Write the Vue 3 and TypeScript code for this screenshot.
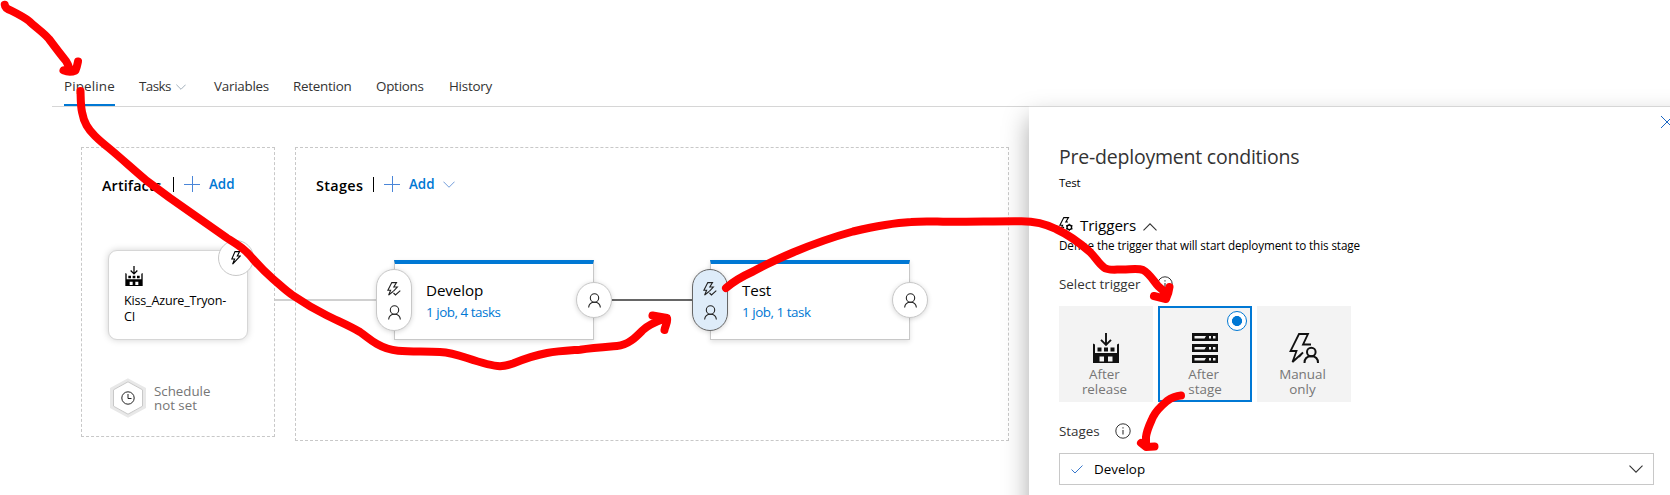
<script setup lang="ts">
interface Tab { label: string; active?: boolean; menu?: boolean }
interface Stage { name: string; summary: string; selected: boolean; x: number }
interface Trigger { lines: string[]; icon: string; width: number; selected?: boolean }

const tabs: Tab[] = [
  { label: 'Pipeline', active: true },
  { label: 'Tasks', menu: true },
  { label: 'Variables' },
  { label: 'Retention' },
  { label: 'Options' },
  { label: 'History' },
]

const stages: Stage[] = [
  { name: 'Develop', summary: '1 job, 4 tasks', selected: false, x: 394 },
  { name: 'Test', summary: '1 job, 1 task', selected: true, x: 710 },
]

const triggers: Trigger[] = [
  { lines: ['After', 'release'], icon: '#i-factory', width: 26 },
  { lines: ['After', 'stage'], icon: '#i-server', width: 26, selected: true },
  { lines: ['Manual', 'only'], icon: '#i-manual', width: 30 },
]

const strokes: string[] = [
  'M4.7 4.7C5 8 8 9.5 11 10.5C18 14 24 17 29 21C35 27 43 32 49 39C55 47 61 55 66 61C68 64 69 67 70 70M63.5 70.3C67 71.8 72 72 75.5 70.5C77 67 77.500 64 78 61.500',
  'M80.500 91C80.800 97 80.500 105 82 112C84 123 88 129 95 136C100 141 105 145 110 149C122 159 135 171 147 181C155 187 162 192 170 198C190 212 210 226 227 238C238 245 245 249 253 259C260 267 266 273 273 279C280 285 286 291 293 295.500C304 303 316 310 327 315.500C338 321 350 326 360 332C366 336 370 340 377 344C384 348 390 350 398 350.700C412 352 426 351 440 352C450 352.500 458 355 467 358C479 362 492 366 500 366.200C504 366 509 365 513 363.500C524 359 536 355 547 353C558 351 569 350.500 580 349.700C592 348 605 347 617 346C629 345 637 336 643 330C648 325 655 322 666 318M652.500 315.500L667 318C668 323 665 326 664.500 330',
  'M726 288C734 281 743 276 753 271.500C766 264 780 258 793 252.500C813 244 833 237 853 231.500C872 227 891 223 911 222C922 221 932 221.500 943 221.700C969 222 995 221 1020 221.200C1033 221 1046 224 1056 229C1069 235 1081 244 1090 252C1096 258 1099 264 1104 267.500C1108 271 1116 269.300 1123 269.500C1130 269.500 1138 268 1143 270C1149 273 1153 280 1158 286L1167 294M1154 296L1166 299C1168 295 1169 291 1169.500 287',
  'M1181 395.500C1175 396 1171 398 1167 401C1161 406 1156 411 1153 417C1150 424 1147 429 1146 437V446M1141 443L1146 447L1154.500 446.500',
]
</script>

<template>
  <div class="page">
    <svg class="defs" aria-hidden="true">
      <symbol id="i-factory" viewBox="0 0 26 30">
        <path d="M13 0V11M8 6.800L13 11.800L18 6.800" fill="none" stroke="currentColor" stroke-width="1.900" />
        <path fill-rule="evenodd" d="M0 10.500L2 11.500V20H24V11.500L26 10.500V30H0ZM6.500 23.500V28.500H11V23.500ZM15 23.500V28.500H19.500V23.500Z" fill="currentColor" />
        <path d="M4.500 14.500h4v4h-4zM11 14.500h4v4h-4zM17.500 14.500h4v4h-4z" fill="currentColor" />
      </symbol>
      <symbol id="i-server" viewBox="0 0 26 30">
        <g v-for="y in [0, 11, 22]" :key="y">
          <path fill-rule="evenodd" :d="`M0 ${y}h26v8h-26zM2.500 ${y + 3}v2.500h10l1.500-2.500zM17 ${y + 3}v2.500h2v-2.500zM21 ${y + 3}v2.500h2.500v-2.500z`" fill="currentColor" />
        </g>
      </symbol>
      <symbol id="i-manual" viewBox="0 0 30 30">
        <path d="M14 19.500L3.500 29L7.500 18H1.500L10 1H19L14 11.500H22M14 19.500L10 24" fill="none" stroke="currentColor" stroke-width="1.800" />
        <circle cx="22.300" cy="19" r="4.300" fill="none" stroke="currentColor" stroke-width="2" />
        <path d="M15.500 30C15.500 25.500 18 23.300 22.300 23.300S29 25.500 29 30" fill="none" stroke="currentColor" stroke-width="2" />
      </symbol>
      <symbol id="i-bolt" viewBox="0 0 10 14">
        <path d="M4 .6H8.600L6.300 5H9.300L1.600 13.200L3.600 8H.8Z" fill="none" stroke="currentColor" stroke-width="1.100" />
      </symbol>
      <symbol id="i-bolt-check" viewBox="0 0 14 14">
        <path d="M6 9.500L1.600 13.200L3.600 8.200H.9L4.800 .6H9.500L6.800 5H10.300L6.300 9.300M6.500 11L8.500 13L13.300 8.600" fill="none" stroke="currentColor" stroke-width="1.100" />
      </symbol>
      <symbol id="i-bolt-gear" viewBox="0 0 14 14">
        <path d="M5 10L1.600 13.200L3.600 8.200H.9L4.800 .6H9.500L6.800 5H9" fill="none" stroke="currentColor" stroke-width="1.100" />
        <circle cx="10.300" cy="10.300" r="2.300" fill="none" stroke="currentColor" stroke-width="1.300" />
        <path d="M10.300 6.800v1M10.300 12.800v1M7.200 8.500l1 .6M12.400 11.500l1 .6M7.200 12.100l1-.6M12.400 9.100l1-.6" stroke="currentColor" stroke-width="1.300" />
      </symbol>
      <symbol id="i-person" viewBox="0 0 13 15">
        <circle cx="6.500" cy="5" r="4.200" fill="none" stroke="currentColor" stroke-width="1.100" />
        <path d="M.6 14.500C.9 11.200 3 9.200 6.500 9.200S12.100 11.200 12.400 14.500" fill="none" stroke="currentColor" stroke-width="1.100" />
      </symbol>
      <symbol id="i-plus" viewBox="0 0 16 16">
        <path d="M8.500 0V16M0 8.500H16" stroke="currentColor" stroke-width="1" />
      </symbol>
      <symbol id="i-chevron" viewBox="0 0 14 8">
        <path d="M.5 .7L7 7.200L13.500 .7" fill="none" stroke="currentColor" stroke-width="1.100" />
      </symbol>
      <symbol id="i-info" viewBox="0 0 16 16">
        <circle cx="8" cy="8" r="7.200" fill="none" stroke="currentColor" stroke-width="1" />
        <path d="M8 7V11.500M8 4.300V5.500" stroke="currentColor" stroke-width="1.100" />
      </symbol>
    </svg>

    <nav class="tabs">
      <a v-for="tab in tabs" :key="tab.label" class="tab" :class="{ active: tab.active, menu: tab.menu }">
        <span>{{ tab.label }}</span>
        <svg v-if="tab.menu" class="tab-chevron"><use href="#i-chevron" /></svg>
      </a>
    </nav>

    <main class="canvas">
      <section class="group artifacts">
        <header class="group-head">
          <h2>Artifacts</h2>
          <button class="add"><svg class="plus"><use href="#i-plus" /></svg><span>Add</span></button>
        </header>
        <div class="artifact">
          <svg class="artifact-icon"><use href="#i-factory" /></svg>
          <div class="artifact-name">Kiss_Azure_Tryon-<br>CI</div>
          <span class="badge"><svg class="bolt"><use href="#i-bolt" /></svg></span>
        </div>
        <div class="schedule">
          <svg class="hexagon" viewBox="0 0 36 40">
            <path d="M18 2L34.500 11V29L18 38L1.500 29V11Z" fill="#fff" stroke="#e8e8e8" stroke-width="3" />
            <path d="M18 3.800L32.500 11.800V28.200L18 36.200L3.500 28.200V11.800Z" fill="#fff" stroke="#c8c8c8" />
            <circle cx="18" cy="20" r="6.200" fill="none" stroke="#222" />
            <path d="M18 16V20.500H21.500" fill="none" stroke="#222" />
          </svg>
          <p><span>Schedule</span><span>not set</span></p>
        </div>
      </section>

      <section class="group stages">
        <header class="group-head">
          <h2>Stages</h2>
          <button class="add"><svg class="plus"><use href="#i-plus" /></svg><span>Add</span><svg class="add-chevron"><use href="#i-chevron" /></svg></button>
        </header>
      </section>
    </main>

    <div class="connector from-artifact"></div>
    <div class="connector between"></div>
    <article v-for="stage in stages" :key="stage.name" class="stage" :style="{ left: stage.x + 'px' }">
      <h3>{{ stage.name }}</h3>
      <a>{{ stage.summary }}</a>
      <span class="pre" :class="{ selected: stage.selected }">
        <svg class="bolt-check"><use href="#i-bolt-check" /></svg>
        <svg class="person"><use href="#i-person" /></svg>
      </span>
      <span class="post"><svg class="person"><use href="#i-person" /></svg></span>
    </article>

    <div class="panel-clip">
      <aside class="panel">
        <svg class="close" viewBox="0 0 12 12"><path d="M0 0L12 12M12 0L0 12" stroke="currentColor" /></svg>
        <h1>Pre-deployment conditions</h1>
        <div class="subtitle">Test</div>
        <div class="section-title">
          <svg class="bolt-gear"><use href="#i-bolt-gear" /></svg>
          <span>Triggers</span>
          <svg class="chevron up"><use href="#i-chevron" /></svg>
        </div>
        <div class="hint">Define the trigger that will start deployment to this stage</div>
        <div class="label select-trigger"><span>Select trigger</span><svg class="info"><use href="#i-info" /></svg></div>
        <div class="choices">
          <div v-for="t in triggers" :key="t.icon" class="choice" :class="{ selected: t.selected }">
            <svg class="choice-icon" :style="{ width: t.width + 'px' }"><use :href="t.icon" /></svg>
            <div class="choice-text"><span v-for="line in t.lines" :key="line">{{ line }}</span></div>
            <i v-if="t.selected" class="radio"></i>
          </div>
        </div>
        <div class="label stage-label"><span>Stages</span><svg class="info"><use href="#i-info" /></svg></div>
        <div class="select">
          <svg class="check" viewBox="0 0 12 9"><path d="M.5 4.500L4 8L11.500 .5" fill="none" stroke="currentColor" /></svg>
          <span>Develop</span>
          <svg class="chevron"><use href="#i-chevron" /></svg>
        </div>
      </aside>
    </div>

    <svg class="markup" viewBox="0 0 1670 495">
      <path v-for="(d, i) in strokes" :key="i" :d="d" />
    </svg>
  </div>
</template>

<style>
body { margin: 0; background: #fff; overflow: hidden; }
</style>

<style scoped>
.page {
  position: relative;
  width: 1670px;
  height: 495px;
  overflow: hidden;
  background: #fff;
  font-family: "Open Sans", "Noto Sans", sans-serif;
  font-size: 13.4px;
  letter-spacing: -0.25px;
  color: #000;
}
svg { display: block; flex: none; }
.defs { position: absolute; width: 0; height: 0; }
h1, h2, h3, p { margin: 0; font-weight: 400; }

.tabs {
  display: grid;
  grid-template-columns: 75px 75px 79px 83px 73px 80px;
  margin-left: 52px;
  padding: 76px 0 0 12px;
  height: 30px;
  border-bottom: 1px solid #d6d6d6;
  color: #333;
}
.tab {
  display: flex;
  justify-self: start;
  box-sizing: border-box;
  height: 30px;
  line-height: 20px;
}
.tab.active { width: 51px; font-weight: 500; letter-spacing: 0.15px; border-bottom: 2px solid #0078d4; }
.tab.menu { letter-spacing: -0.55px; }
.tab-chevron { width: 10px; height: 6px; margin: 8px 0 0 5px; color: #8a9aa8; }

.canvas { display: flex; align-items: flex-start; gap: 20px; padding: 40px 0 0 81px; }
.group { box-sizing: border-box; border: 1px dashed #c8c8c8; padding: 24px 0 0 20px; }
.artifacts { width: 194px; height: 290px; }
.stages { width: 714px; height: 294px; }
.group-head { display: flex; height: 26px; }
h2 { font-size: 14.4px; font-weight: 600; line-height: 28px; letter-spacing: 0.35px; white-space: nowrap; }
.artifacts h2 { width: 61px; letter-spacing: 0.1px; }
.stages h2 { width: 47px; }
.add {
  position: relative;
  display: flex;
  margin: 5px 0 0 10px;
  padding: 0 0 0 10px;
  height: 15px;
  border: 0;
  border-left: 1px solid #000;
  background: none;
  font: 600 13.4px/14px "Open Sans", "Noto Sans", sans-serif;
  color: #0078d4;
}
.plus { width: 16px; height: 16px; margin: -1px 9px 0 0; color: #4a86d8; }
.add-chevron { width: 12px; height: 7px; margin: 4px 0 0 8px; color: #6a97d8; }

.artifact {
  position: relative;
  box-sizing: border-box;
  width: 140px;
  height: 90px;
  margin: 52px 0 0 6px;
  padding: 15px 0 0 16px;
  border: 1px solid #d6d6d6;
  border-radius: 9px;
  background: #fff;
  box-shadow: 0 0 7px rgba(0, 0, 0, 0.18);
}
.artifact-icon { width: 18px; height: 20px; }
.artifact-name { margin: 7px 0 0 -1px; font-size: 12.6px; line-height: 16px; letter-spacing: -0.2px; }
.badge {
  position: absolute;
  left: 109px;
  top: -11px;
  display: grid;
  place-items: center;
  box-sizing: border-box;
  width: 36px;
  height: 36px;
  border: 1px solid #c8c8c8;
  border-radius: 50%;
  background: #fff;
}
.bolt { width: 10px; height: 14px; }
.schedule { display: flex; align-items: center; gap: 8px; margin: 38px 0 0 8px; color: #767676; }
.hexagon { width: 36px; height: 40px; }
.schedule p { display: flex; flex-direction: column; font-size: 13.300px; line-height: 14.500px; letter-spacing: 0; }

.connector { position: absolute; top: 299px; height: 2px; }
.from-artifact { left: 275px; width: 101px; background: #d0d0d0; }
.between { left: 612px; width: 80px; background: #666; }

.stage {
  position: absolute;
  top: 260px;
  box-sizing: border-box;
  width: 200px;
  height: 80px;
  padding: 17px 0 0 31px;
  border: 1px solid #c8c8c8;
  border-top: 4px solid #0078d4;
  background: #fff;
  box-shadow: 0 2px 5px rgba(0, 0, 0, 0.12);
}
h3 { font-size: 15.2px; line-height: 19px; letter-spacing: -0.1px; }
.stage a { display: block; margin-top: 3px; line-height: 18px; letter-spacing: -0.45px; color: #0078d4; }
.pre, .post {
  position: absolute;
  display: flex;
  flex-direction: column;
  align-items: center;
  box-sizing: border-box;
  width: 36px;
  border: 1px solid #c8c8c8;
  border-radius: 18px;
  background: #fff;
  box-shadow: 0 1px 5px rgba(0, 0, 0, 0.16);
  color: #222;
}
.pre { left: -19px; top: 5px; height: 62px; padding-top: 12px; gap: 9px; }
.pre.selected { background: #deecf9; border-color: #666; }
.post { left: 181px; top: 18px; height: 36px; justify-content: center; }
.bolt-check { width: 14px; height: 14px; }
.person { width: 13px; height: 15px; }

.panel-clip { position: absolute; left: 980px; top: 82px; width: 690px; height: 413px; overflow: hidden; }
.panel {
  position: relative;
  box-sizing: border-box;
  width: 680px;
  height: 500px;
  margin: 25px 0 0 49px;
  padding: 36px 0 0 30px;
  background: #fff;
  box-shadow: 0 -1px 0 #d6d6d6, 0 11px 24px rgba(0, 0, 0, 0.34);
}
.close { position: absolute; left: 632px; top: 9px; width: 12px; height: 12px; overflow: visible; color: #1a66c4; }
h1 { font-size: 19.5px; line-height: 28px; letter-spacing: -0.22px; color: #333; }
.subtitle { margin: 3px 0 0; font-size: 11.5px; line-height: 18px; }
.section-title { display: flex; margin-top: 22px; height: 22px; }
.section-title span { width: 57px; margin-left: 7px; font-size: 15.2px; line-height: 23px; letter-spacing: -0.1px; }
.bolt-gear { width: 14px; height: 14px; margin-top: 3px; }
.chevron { width: 14px; height: 8px; color: #333; }
.up { transform: rotate(180deg); margin: 9px 0 0 6px; }
.hint { margin: 0; font-size: 11.700px; line-height: 18px; white-space: nowrap; letter-spacing: -0.11px; }
.label { display: flex; align-items: center; height: 20px; letter-spacing: 0; color: #333; }
.info { width: 16px; height: 16px; }
.select-trigger { margin-top: 20px; }
.select-trigger span { width: 98px; }
.choices { display: flex; gap: 5px; margin-top: 12px; }
.choice {
  position: relative;
  display: flex;
  flex-direction: column;
  align-items: center;
  box-sizing: border-box;
  width: 94px;
  height: 96px;
  padding-top: 27px;
  background: #f3f3f3;
  color: #111;
}
.choice.selected { padding-top: 25px; border: 2px solid #0078d4; }
.choice-icon { height: 30px; }
.choice-text { display: flex; flex-direction: column; align-items: center; margin: 4px 3px 0 0; line-height: 15px; font-size: 13.400px; letter-spacing: 0; color: #767676; }
.choice.selected .choice-text { align-items: flex-start; margin-right: 0; }
.radio {
  position: absolute;
  right: 3px;
  top: 3px;
  box-sizing: border-box;
  width: 20px;
  height: 20px;
  border: 1px solid #0078d4;
  border-radius: 50%;
  background: radial-gradient(circle, #0078d4 4.700px, #fff 5.300px);
}
.stage-label { margin-top: 19px; }
.stage-label span { width: 56px; }
.select {
  display: flex;
  align-items: center;
  box-sizing: border-box;
  width: 595px;
  height: 32px;
  margin-top: 12px;
  padding: 0 10px 0 11px;
  border: 1px solid #c8c8c8;
}
.check { width: 12px; height: 9px; color: #3878cc; }
.select span { flex: 1; margin-left: 11px; letter-spacing: 0; }

.markup {
  position: absolute;
  left: 0;
  top: 0;
  width: 1670px;
  height: 495px;
  fill: none;
  stroke: #f00;
  stroke-width: 8;
  stroke-linecap: round;
  stroke-linejoin: round;
  pointer-events: none;
}
</style>
